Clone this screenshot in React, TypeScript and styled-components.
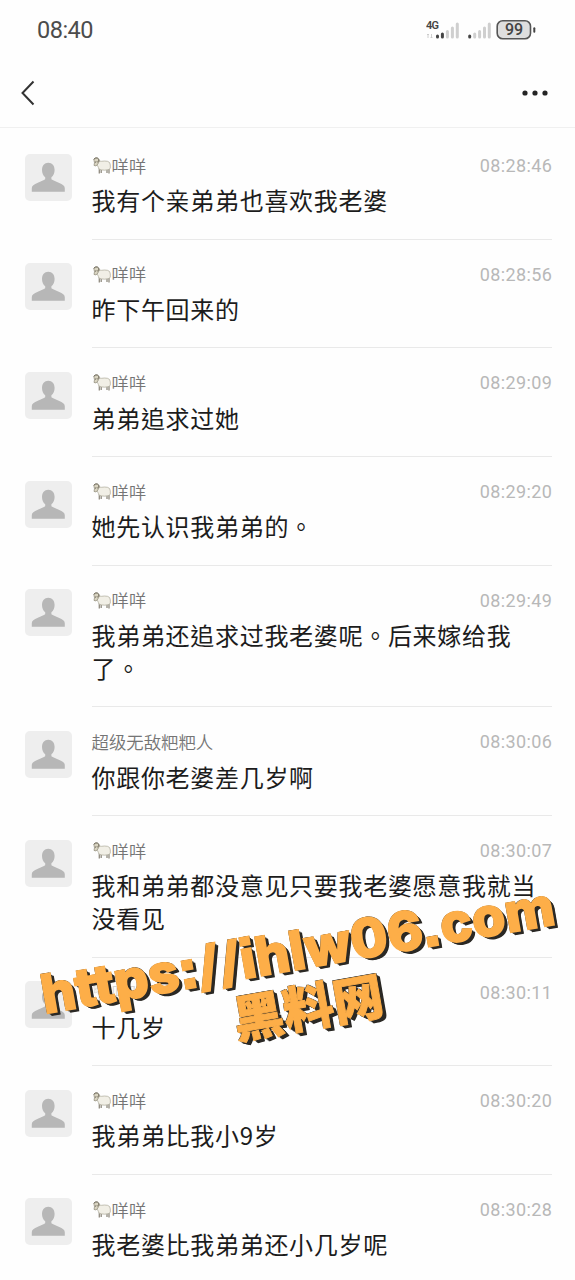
import React from "react";
import styled, { createGlobalStyle } from "styled-components";

const GlobalStyle = createGlobalStyle`
  * { box-sizing: border-box; }
  body { margin: 0; background: #fefefe; overflow: hidden; font-family: "Noto Sans CJK TC", "Noto Sans CJK SC", sans-serif; }
`;

const Screen = styled.main`
  position: relative;
  width: 575px;
  height: 1280px;
  overflow: hidden;
  background: #fefefe;
`;

const StatusBar = styled.header`
  display: flex;
  align-items: center;
  justify-content: space-between;
  height: 60px;
  padding: 0 37px 0 37px;
`;

const Clock = styled.span`
  font: 400 23.5px/28px Roboto, sans-serif;
  letter-spacing: -0.5px;
  color: #4c4c4c;
`;

const StatusIcons = styled.svg`
  display: block;
  width: 112px;
  height: 28px;
`;

const NavBar = styled.nav`
  display: flex;
  align-items: center;
  justify-content: space-between;
  height: 68px;
  padding: 0 26px 2px 20px;
  border-bottom: 1px solid #f0f0f0;
`;

const List = styled.ul`
  margin: 0;
  padding: 3px 23px 0 25px;
  list-style: none;
`;

const Row = styled.li`
  display: flex;
  gap: 19.5px;
`;

const Avatar = styled.svg`
  flex: none;
  width: 47px;
  height: 47px;
  margin-top: 23.4px;
`;

const Body = styled.div`
  flex: 1;
  padding: 22.5px 0 21.85px;
  border-bottom: 1px solid #e9e9e9;
`;

const Meta = styled.div`
  display: flex;
  align-items: center;
  justify-content: space-between;
  height: 23px;
  margin-bottom: 7.7px;
`;

const Name = styled.span<{ $faded?: boolean }>`
  display: flex;
  align-items: center;
  font-size: 17.4px;
  font-weight: 350;
  line-height: 23px;
  color: #757575;
  opacity: ${(p) => (p.$faded ? 0.3 : 1)};
`;

const SheepIcon = styled.svg`
  width: 20px;
  height: 20px;
  margin-top: 2px;
`;

const Time = styled.time`
  font: 400 18px/23px Roboto, sans-serif;
  letter-spacing: 0.4px;
  margin: 1px -0.4px 0 0;
  color: #b8b8b8;
`;

const Message = styled.p`
  width: 450px;
  margin: 0;
  font-size: 24px;
  letter-spacing: 0.7px;
  line-height: 32.7px;
  color: #1c1c1c;
`;

const Watermark = styled.div`
  position: absolute;
  left: 42px;
  top: 920px;
  width: 530px;
  transform: rotate(-9.9deg);
  color: #fdae48;
  white-space: nowrap;
  text-shadow: -0.7px -0.7px 0 #2b2925, 0.8px -0.5px 0 #2b2925, 1px 1px 0 #2b2925,
    2px 2px 0 #2b2925, 3px 3px 0 #2b2925, 3.5px 3.5px 0 #2b2925;
`;

const WatermarkUrl = styled.div`
  font: 800 53.6px/58px Inter, sans-serif;
  font-feature-settings: "ss07";
  letter-spacing: 0.3px;
  -webkit-text-stroke: 1.8px #fdae48;
`;

const WatermarkName = styled.div`
  margin-left: 185px;
  margin-top: -1px;
  font: 900 50.5px/54px "Noto Sans CJK SC", sans-serif;
  -webkit-text-stroke: 0.9px #fdae48;
`;

interface Entry {
  time: string;
  text: string;
  name?: string;
  faded?: boolean;
}

const entries: Entry[] = [
  { time: "08:28:46", text: "我有个亲弟弟也喜欢我老婆" },
  { time: "08:28:56", text: "昨下午回来的" },
  { time: "08:29:09", text: "弟弟追求过她" },
  { time: "08:29:20", text: "她先认识我弟弟的。" },
  { time: "08:29:49", text: "我弟弟还追求过我老婆呢。后来嫁给我了。" },
  { time: "08:30:06", text: "你跟你老婆差几岁啊", name: "超级无敌粑粑人" },
  { time: "08:30:07", text: "我和弟弟都没意见只要我老婆愿意我就当没看见" },
  { time: "08:30:11", text: "十几岁", faded: true },
  { time: "08:30:20", text: "我弟弟比我小9岁" },
  { time: "08:30:28", text: "我老婆比我弟弟还小几岁呢" },
];

const Sheep = () => (
  <SheepIcon viewBox="0 0 20 20">
    <path d="M7.300 12v5.500M9.200 12.500v4.500M15 12v5M17 11v6.500" stroke="#8f8a7e" strokeWidth="1.300" />
    <path d="M6 5.500q1.500-.8 3.500-.2 3-.6 6 0 2.800.6 2.800 3.700v3q-.8 2-2.600 1.700-3 .9-6 .2-3 .1-3.400-2.600L4.800 8z" fill="#f1efe6" stroke="#aaa798" strokeWidth=".7" />
    <path d="M2 4.500Q2.800 1.800 5 2q2.400.5 2.300 3.200L5.800 8 4 10l-2-.6.5-2.600z" fill="#dad5c2" stroke="#8b8676" strokeWidth=".7" />
    <path d="M1.500 3.600Q3 1 5.300 1.900q2.200 1.100 1.500 3.200-1 1.400-2.200.6" fill="none" stroke="#777162" strokeWidth="1" />
    <circle cx="3.400" cy="6" r=".6" fill="#4e4a40" />
  </SheepIcon>
);

const Person = () => (
  <Avatar viewBox="0 0 47 47">
    <rect width="47" height="47" rx="5" fill="#eeeeee" />
    <path d="M23.300 8.700c-3.900 0-6.300 3-6.300 7.200 0 3.300 1.300 5.900 3.200 7.300v2.100c-1.200 1.100-4.200 2-7.400 3.400-3.900 1.600-6 3-6 5.500v3.600h33v-3.600c0-2.500-2.100-3.900-6-5.500-3.200-1.400-6.200-2.300-7.400-3.400v-2.100c1.900-1.400 3.200-4 3.200-7.300 0-4.200-2.400-7.200-6.300-7.200z" fill="#b7b7b7" />
  </Avatar>
);

const Status = () => (
  <StatusIcons viewBox="0 0 112 28">
    <text x="0" y="13" fontFamily="Roboto" fontSize="11" fontWeight="600" fill="#444" textLength="13">4G</text>
    <path d="M2 18v4M1 19l1-1 1 1M5.500 18v4M4.500 21l1 1 1-1" stroke="#c4c4c4" strokeWidth=".8" fill="none" />
    <g strokeWidth="3" strokeLinecap="round">
      <path d="M11.500 20v1M16.400 18v3" stroke="#444" />
      <path d="M21.400 15.500v5.500M26.400 12v9M31.300 8v13" stroke="#cfcfcf" />
      <path d="M43.700 20v1" stroke="#444" />
      <path d="M48.700 18v3M53.600 15.500v5.500M58.500 12v9M63.300 8v13" stroke="#cfcfcf" />
    </g>
    <rect x="71.200" y="4.800" width="33.300" height="18" rx="5.500" fill="#dedede" stroke="#555" strokeWidth="1.600" />
    <text x="88" y="19.400" textAnchor="middle" fontFamily="Roboto" fontSize="16" fontWeight="500" fill="#444">99</text>
    <path d="M108.300 12.200v3.500" stroke="#444" strokeWidth="2" strokeLinecap="round" />
  </StatusIcons>
);

export default function App() {
  return (
    <Screen>
      <GlobalStyle />
      <StatusBar>
        <Clock>08:40</Clock>
        <Status />
      </StatusBar>
      <NavBar>
        <svg width="16" height="26" viewBox="0 0 16 26">
          <path d="M13.500 1.500L2.500 13l11 11.500" fill="none" stroke="#333" strokeWidth="2" />
        </svg>
        <svg width="28" height="8" viewBox="0 0 28 8" fill="#252525">
          <circle cx="4" cy="4" r="2.600" />
          <circle cx="14" cy="4" r="2.600" />
          <circle cx="24" cy="4" r="2.600" />
        </svg>
      </NavBar>
      <List>
        {entries.map((e) => (
          <Row key={e.time}>
            <Person />
            <Body>
              <Meta>
                <Name $faded={e.faded}>
                  {!e.name && <Sheep />}
                  {e.name ?? "咩咩"}
                </Name>
                <Time>{e.time}</Time>
              </Meta>
              <Message>{e.text}</Message>
            </Body>
          </Row>
        ))}
      </List>
      <Watermark>
        <WatermarkUrl>https://ihlw06.com</WatermarkUrl>
        <WatermarkName>黑料网</WatermarkName>
      </Watermark>
    </Screen>
  );
}
